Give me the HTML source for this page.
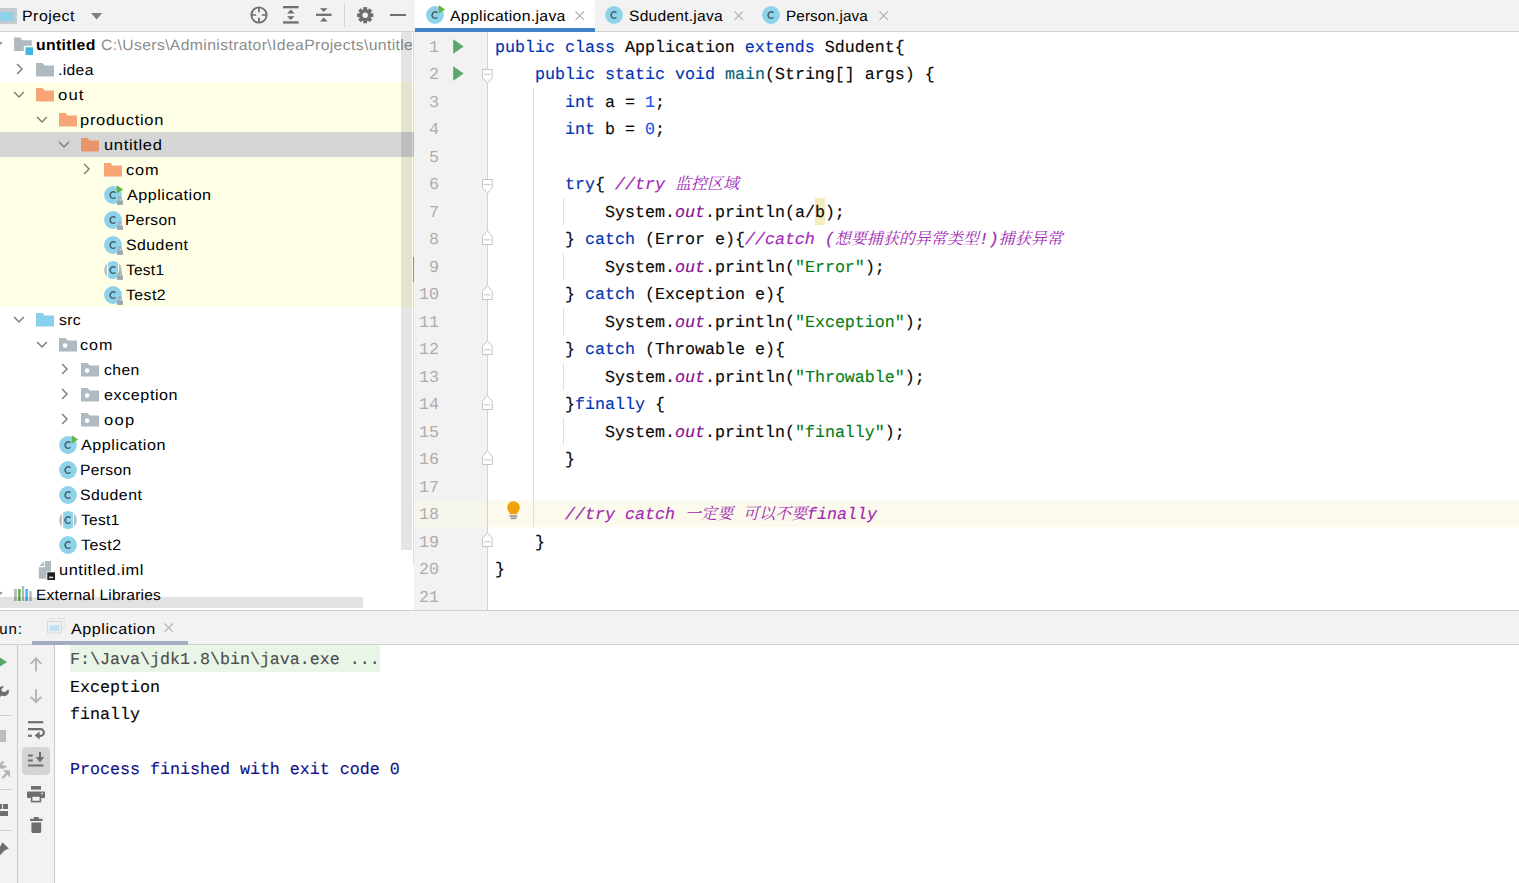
<!DOCTYPE html>
<html lang="en"><head><meta charset="utf-8"><title>untitled - Application.java</title>
<style>
html,body{margin:0;padding:0;}
body{width:1519px;height:883px;position:relative;overflow:hidden;background:#fff;
 font-family:"Liberation Sans",sans-serif;color:#000;text-rendering:geometricPrecision;}
section{position:absolute;left:0;top:0;width:0;height:0}
.ic{position:absolute;display:block;overflow:visible}
.abs{position:absolute}
.tl{position:absolute;transform-origin:0 0;white-space:pre;font-size:15px;letter-spacing:0.62px;line-height:25px;height:25px;
 margin-top:1.0px;color:#000}
.tl.b{font-weight:bold}
.tl.g{color:#8c8c8c}
.cl,.ln,.co{position:absolute;white-space:pre;font-family:"Liberation Mono",monospace;font-size:16.667px;
 line-height:27.5px;height:27.5px;color:#080808;letter-spacing:-0.0018px}
.cl,.co{-webkit-text-stroke:0.15px}
.ln{left:414px;width:25px;text-align:right;color:#adadad}
.k{color:#0033b3} .s{color:#067d17} .n{color:#1750eb} .m{color:#00627a}
.f{color:#871094;font-style:italic}
.c{color:#a128b4;font-style:italic}
.w{background:#f6ebbc}
.cj{display:inline-block;overflow:visible;vertical-align:baseline;font-family:"Liberation Mono","Noto Serif CJK SC",serif;font-size:16px;letter-spacing:0;-webkit-text-stroke:0;white-space:nowrap}
.tab{position:absolute;top:0;height:31px;line-height:31px;font-size:15px;letter-spacing:0.3px;white-space:pre}
</style></head><body>
<section id="project-tool-window" aria-label="Project tool window">
<div class="abs" style="left:0;top:82px;width:414px;height:225px;background:#fffee6"></div>
<div class="abs" style="left:0;top:132px;width:414px;height:25px;background:#d5d5d5"></div>
<svg class="ic" style="left:-9.4px;top:41.3px" width="12" height="7.2" viewBox="0 0 12 7.2" ><path d="M1.1 1.1L6 6L10.9 1.1" fill="none" stroke="#7c7c7c" stroke-width="1.45"/></svg>
<svg class="ic" style="left:0px;top:32px" width="34" height="25" viewBox="0 0 34 25" ><path d="M14.1 5.4H20.2L22.6 8.2H31.8V13.8H23.8V18.9H14.1Z" fill="#aeb9c0"/><rect x="25.5" y="15.3" width="7.5" height="7.7" fill="#40b6e0"/></svg>
<div class="tl b" style="left:35.60px;top:32px;letter-spacing:0.315px;transform:scaleX(1.0530);transform-origin:0 0;">untitled</div>
<div class="tl g" style="left:101.3px;top:32px;letter-spacing:0.35px;transform:scaleX(1.049);width:297px;overflow:hidden">C:\Users\Administrator\IdeaProjects\untitled</div>
<svg class="ic" style="left:15.9px;top:63.099999999999994px" width="7.2" height="12" viewBox="0 0 7.2 12" ><path d="M1.1 1.1L6 6L1.1 10.9" fill="none" stroke="#7c7c7c" stroke-width="1.45"/></svg>
<svg class="ic" style="left:36.1px;top:62.5px" width="18" height="14" viewBox="0 0 18 14" ><path d="M0 0H6.6L8.6 2.6H18V13.6H0Z" fill="#aeb9c0"/></svg>
<div class="tl" style="left:57.75px;top:57px;letter-spacing:0.332px;transform:scaleX(1.0453);transform-origin:0 0;">.idea</div>
<svg class="ic" style="left:13.0px;top:91.3px" width="12" height="7.2" viewBox="0 0 12 7.2" ><path d="M1.1 1.1L6 6L10.9 1.1" fill="none" stroke="#7c7c7c" stroke-width="1.45"/></svg>
<svg class="ic" style="left:36.1px;top:87.5px" width="18" height="14" viewBox="0 0 18 14" ><path d="M0 0H6.6L8.6 2.6H18V13.6H0Z" fill="#f6a574"/></svg>
<div class="tl" style="left:58.00px;top:82px;letter-spacing:0.956px;transform:scaleX(1.1169);transform-origin:0 0;">out</div>
<svg class="ic" style="left:36.0px;top:116.3px" width="12" height="7.2" viewBox="0 0 12 7.2" ><path d="M1.1 1.1L6 6L10.9 1.1" fill="none" stroke="#7c7c7c" stroke-width="1.45"/></svg>
<svg class="ic" style="left:59.2px;top:112.5px" width="18" height="14" viewBox="0 0 18 14" ><path d="M0 0H6.6L8.6 2.6H18V13.6H0Z" fill="#f6a574"/></svg>
<div class="tl" style="left:80.25px;top:107px;letter-spacing:0.652px;transform:scaleX(1.0989);transform-origin:0 0;">production</div>
<svg class="ic" style="left:58.0px;top:141.3px" width="12" height="7.2" viewBox="0 0 12 7.2" ><path d="M1.1 1.1L6 6L10.9 1.1" fill="none" stroke="#7c7c7c" stroke-width="1.45"/></svg>
<svg class="ic" style="left:80.9px;top:137.5px" width="18" height="14" viewBox="0 0 18 14" ><path d="M0 0H6.6L8.6 2.6H18V13.6H0Z" fill="#e8956c"/></svg>
<div class="tl" style="left:103.50px;top:132px;letter-spacing:0.604px;transform:scaleX(1.1009);transform-origin:0 0;">untitled</div>
<svg class="ic" style="left:83.30000000000001px;top:163.10000000000002px" width="7.2" height="12" viewBox="0 0 7.2 12" ><path d="M1.1 1.1L6 6L1.1 10.9" fill="none" stroke="#7c7c7c" stroke-width="1.45"/></svg>
<svg class="ic" style="left:104.1px;top:162.5px" width="18" height="14" viewBox="0 0 18 14" ><path d="M0 0H6.6L8.6 2.6H18V13.6H0Z" fill="#f6a574"/></svg>
<div class="tl" style="left:125.50px;top:157px;letter-spacing:0.855px;transform:scaleX(1.0869);transform-origin:0 0;">com</div>
<svg class="ic" style="left:102.0px;top:183.9px" width="22" height="22" viewBox="0 0 22 22" ><circle cx="11" cy="11" r="8.9" fill="#8fd3ea"/><path d="M13.45 8.85A3.05 3.3 0 1 0 13.45 13.35" fill="none" stroke="#3f5561" stroke-opacity="0.92" stroke-width="1.4"/><path d="M14.7 1.2L21.2 5.5L14.7 9.4Z" fill="#62b543"/><path d="M16.7 16.6V14.3a1.25 1.4 0 0 1 2.5 0V16.6" fill="none" stroke="#9aa7b0" stroke-width="1.1"/><rect x="15" y="16.4" width="5.9" height="4.5" fill="#9aa7b0"/></svg>
<div class="tl" style="left:126.60px;top:182px;letter-spacing:0.477px;transform:scaleX(1.0761);transform-origin:0 0;">Application</div>
<svg class="ic" style="left:102.0px;top:208.9px" width="22" height="22" viewBox="0 0 22 22" ><circle cx="11" cy="11" r="8.9" fill="#8fd3ea"/><path d="M13.45 8.85A3.05 3.3 0 1 0 13.45 13.35" fill="none" stroke="#3f5561" stroke-opacity="0.92" stroke-width="1.4"/><path d="M16.7 16.6V14.3a1.25 1.4 0 0 1 2.5 0V16.6" fill="none" stroke="#9aa7b0" stroke-width="1.1"/><rect x="15" y="16.4" width="5.9" height="4.5" fill="#9aa7b0"/></svg>
<div class="tl" style="left:125.20px;top:207px;letter-spacing:0.328px;transform:scaleX(1.0418);transform-origin:0 0;">Person</div>
<svg class="ic" style="left:102.0px;top:233.9px" width="22" height="22" viewBox="0 0 22 22" ><circle cx="11" cy="11" r="8.9" fill="#8fd3ea"/><path d="M13.45 8.85A3.05 3.3 0 1 0 13.45 13.35" fill="none" stroke="#3f5561" stroke-opacity="0.92" stroke-width="1.4"/><path d="M16.7 16.6V14.3a1.25 1.4 0 0 1 2.5 0V16.6" fill="none" stroke="#9aa7b0" stroke-width="1.1"/><rect x="15" y="16.4" width="5.9" height="4.5" fill="#9aa7b0"/></svg>
<div class="tl" style="left:126.20px;top:232px;letter-spacing:0.458px;transform:scaleX(1.0546);transform-origin:0 0;">Sdudent</div>
<svg class="ic" style="left:102.0px;top:258.9px" width="22" height="22" viewBox="0 0 22 22" ><path d="M4.9 4.52A8.9 8.9 0 0 0 4.9 17.48Z" fill="#b5bdc4"/><path d="M17 4.43A8.9 8.9 0 0 1 17 17.57Z" fill="#b5bdc4"/><path d="M6.1 3.57A8.9 8.9 0 0 1 16 3.64V18.36A8.9 8.9 0 0 1 6.1 18.43Z" fill="#8fd3ea"/><path d="M13.45 8.85A3.05 3.3 0 1 0 13.45 13.35" fill="none" stroke="#3f5561" stroke-opacity="0.92" stroke-width="1.4"/><path d="M16.7 16.6V14.3a1.25 1.4 0 0 1 2.5 0V16.6" fill="none" stroke="#9aa7b0" stroke-width="1.1"/><rect x="15" y="16.4" width="5.9" height="4.5" fill="#9aa7b0"/></svg>
<div class="tl" style="left:126.20px;top:257px;letter-spacing:0.236px;transform:scaleX(1.0335);transform-origin:0 0;">Test1</div>
<svg class="ic" style="left:102.0px;top:283.9px" width="22" height="22" viewBox="0 0 22 22" ><circle cx="11" cy="11" r="8.9" fill="#8fd3ea"/><path d="M13.45 8.85A3.05 3.3 0 1 0 13.45 13.35" fill="none" stroke="#3f5561" stroke-opacity="0.92" stroke-width="1.4"/><path d="M16.7 16.6V14.3a1.25 1.4 0 0 1 2.5 0V16.6" fill="none" stroke="#9aa7b0" stroke-width="1.1"/><rect x="15" y="16.4" width="5.9" height="4.5" fill="#9aa7b0"/></svg>
<div class="tl" style="left:126.20px;top:282px;letter-spacing:0.405px;transform:scaleX(1.0554);transform-origin:0 0;">Test2</div>
<svg class="ic" style="left:13.0px;top:316.3px" width="12" height="7.2" viewBox="0 0 12 7.2" ><path d="M1.1 1.1L6 6L10.9 1.1" fill="none" stroke="#7c7c7c" stroke-width="1.45"/></svg>
<svg class="ic" style="left:36.1px;top:312.5px" width="18" height="14" viewBox="0 0 18 14" ><path d="M0 0H6.6L8.6 2.6H18V13.6H0Z" fill="#87cfea"/></svg>
<div class="tl" style="left:59.00px;top:307px;letter-spacing:0.326px;transform:scaleX(1.0452);transform-origin:0 0;">src</div>
<svg class="ic" style="left:36.0px;top:341.3px" width="12" height="7.2" viewBox="0 0 12 7.2" ><path d="M1.1 1.1L6 6L10.9 1.1" fill="none" stroke="#7c7c7c" stroke-width="1.45"/></svg>
<svg class="ic" style="left:59.2px;top:337.5px" width="18" height="14" viewBox="0 0 18 14" ><path d="M0 0H6.6L8.6 2.6H18V13.6H0Z" fill="#aeb9c0"/><circle cx="6.1" cy="7.6" r="2.3" fill="#fff"/></svg>
<div class="tl" style="left:80.45px;top:332px;letter-spacing:0.911px;transform:scaleX(1.0746);transform-origin:0 0;">com</div>
<svg class="ic" style="left:60.9px;top:363.1px" width="7.2" height="12" viewBox="0 0 7.2 12" ><path d="M1.1 1.1L6 6L1.1 10.9" fill="none" stroke="#7c7c7c" stroke-width="1.45"/></svg>
<svg class="ic" style="left:80.9px;top:362.5px" width="18" height="14" viewBox="0 0 18 14" ><path d="M0 0H6.6L8.6 2.6H18V13.6H0Z" fill="#aeb9c0"/><circle cx="6.1" cy="7.6" r="2.3" fill="#fff"/></svg>
<div class="tl" style="left:104.25px;top:357px;letter-spacing:0.420px;transform:scaleX(1.0445);transform-origin:0 0;">chen</div>
<svg class="ic" style="left:60.9px;top:388.1px" width="7.2" height="12" viewBox="0 0 7.2 12" ><path d="M1.1 1.1L6 6L1.1 10.9" fill="none" stroke="#7c7c7c" stroke-width="1.45"/></svg>
<svg class="ic" style="left:80.9px;top:387.5px" width="18" height="14" viewBox="0 0 18 14" ><path d="M0 0H6.6L8.6 2.6H18V13.6H0Z" fill="#aeb9c0"/><circle cx="6.1" cy="7.6" r="2.3" fill="#fff"/></svg>
<div class="tl" style="left:103.50px;top:382px;letter-spacing:0.534px;transform:scaleX(1.0745);transform-origin:0 0;">exception</div>
<svg class="ic" style="left:60.9px;top:413.1px" width="7.2" height="12" viewBox="0 0 7.2 12" ><path d="M1.1 1.1L6 6L1.1 10.9" fill="none" stroke="#7c7c7c" stroke-width="1.45"/></svg>
<svg class="ic" style="left:80.9px;top:412.5px" width="18" height="14" viewBox="0 0 18 14" ><path d="M0 0H6.6L8.6 2.6H18V13.6H0Z" fill="#aeb9c0"/><circle cx="6.1" cy="7.6" r="2.3" fill="#fff"/></svg>
<div class="tl" style="left:103.50px;top:407px;letter-spacing:1.136px;transform:scaleX(1.1028);transform-origin:0 0;">oop</div>
<svg class="ic" style="left:57.0px;top:433.9px" width="22" height="22" viewBox="0 0 22 22" ><circle cx="11" cy="11" r="8.9" fill="#8fd3ea"/><path d="M13.45 8.85A3.05 3.3 0 1 0 13.45 13.35" fill="none" stroke="#3f5561" stroke-opacity="0.92" stroke-width="1.4"/><path d="M14.7 1.2L21.2 5.5L14.7 9.4Z" fill="#62b543"/></svg>
<div class="tl" style="left:81.25px;top:432px;letter-spacing:0.495px;transform:scaleX(1.0781);transform-origin:0 0;">Application</div>
<svg class="ic" style="left:57.0px;top:458.9px" width="22" height="22" viewBox="0 0 22 22" ><circle cx="11" cy="11" r="8.9" fill="#8fd3ea"/><path d="M13.45 8.85A3.05 3.3 0 1 0 13.45 13.35" fill="none" stroke="#3f5561" stroke-opacity="0.92" stroke-width="1.4"/></svg>
<div class="tl" style="left:80.45px;top:457px;letter-spacing:0.306px;transform:scaleX(1.0441);transform-origin:0 0;">Person</div>
<svg class="ic" style="left:57.0px;top:483.9px" width="22" height="22" viewBox="0 0 22 22" ><circle cx="11" cy="11" r="8.9" fill="#8fd3ea"/><path d="M13.45 8.85A3.05 3.3 0 1 0 13.45 13.35" fill="none" stroke="#3f5561" stroke-opacity="0.92" stroke-width="1.4"/></svg>
<div class="tl" style="left:80.45px;top:482px;letter-spacing:0.457px;transform:scaleX(1.0546);transform-origin:0 0;">Sdudent</div>
<svg class="ic" style="left:57.0px;top:508.9px" width="22" height="22" viewBox="0 0 22 22" ><path d="M4.9 4.52A8.9 8.9 0 0 0 4.9 17.48Z" fill="#b5bdc4"/><path d="M17 4.43A8.9 8.9 0 0 1 17 17.57Z" fill="#b5bdc4"/><path d="M6.1 3.57A8.9 8.9 0 0 1 16 3.64V18.36A8.9 8.9 0 0 1 6.1 18.43Z" fill="#8fd3ea"/><path d="M13.45 8.85A3.05 3.3 0 1 0 13.45 13.35" fill="none" stroke="#3f5561" stroke-opacity="0.92" stroke-width="1.4"/></svg>
<div class="tl" style="left:81.45px;top:507px;letter-spacing:0.281px;transform:scaleX(1.0381);transform-origin:0 0;">Test1</div>
<svg class="ic" style="left:57.0px;top:533.9px" width="22" height="22" viewBox="0 0 22 22" ><circle cx="11" cy="11" r="8.9" fill="#8fd3ea"/><path d="M13.45 8.85A3.05 3.3 0 1 0 13.45 13.35" fill="none" stroke="#3f5561" stroke-opacity="0.92" stroke-width="1.4"/></svg>
<div class="tl" style="left:81.45px;top:532px;letter-spacing:0.439px;transform:scaleX(1.0639);transform-origin:0 0;">Test2</div>
<svg class="ic" style="left:0px;top:557px" width="56" height="25" viewBox="0 0 56 25" ><path d="M44.8 4.1H51V21.7H38.8V10.2H44.8Z" fill="#aeb9c0"/><path d="M39.5 8.9L43.8 4.6V8.9Z" fill="#aeb9c0"/><rect x="46.5" y="14.5" width="9" height="9" fill="#fff"/><rect x="47.3" y="15.3" width="7.7" height="7.7" fill="#231f20"/><rect x="49" y="19.6" width="4.2" height="1.6" fill="#d8d8d8"/></svg>
<div class="tl" style="left:58.80px;top:557px;letter-spacing:0.503px;transform:scaleX(1.0916);transform-origin:0 0;">untitled.iml</div>
<svg class="ic" style="left:-9.4px;top:591.3px" width="12" height="7.2" viewBox="0 0 12 7.2" ><path d="M1.1 1.1L6 6L10.9 1.1" fill="none" stroke="#7c7c7c" stroke-width="1.45"/></svg>
<svg class="ic" style="left:0px;top:582px" width="34" height="25" viewBox="0 0 34 25" ><rect x="14.1" y="7" width="2.7" height="12" fill="#aeb9c0"/><rect x="18.1" y="7" width="2.5" height="12" fill="#62b543"/><rect x="21.9" y="4.1" width="2.3" height="14.9" fill="#aeb9c0"/><rect x="25.4" y="7" width="2.5" height="12" fill="#40b6e0"/><rect x="29.3" y="9.2" width="2.4" height="9.8" fill="#aeb9c0"/></svg>
<div class="tl" style="left:35.60px;top:582px;letter-spacing:0.208px;transform:scaleX(1.0387);transform-origin:0 0;">External Libraries</div>
<div class="abs" style="left:401px;top:32px;width:11px;height:518px;background:rgba(0,0,0,0.105)"></div>
<div class="abs" style="left:413px;top:32px;width:1px;height:533px;background:rgba(0,0,0,0.13)"></div>
<div class="abs" style="left:413px;top:257px;width:1px;height:25px;background:#8a8a8a"></div>
<div class="abs" style="left:0;top:597.2px;width:362.5px;height:10.6px;background:rgba(0,0,0,0.115)"></div>
<div class="abs" style="left:0;top:0;width:414px;height:31px;background:#f2f2f2"></div>
<div class="abs" style="left:0;top:31px;width:414px;height:1px;background:#d1d1d1"></div>
<div class="abs" style="left:-3px;top:7.6px;width:20px;height:16px;background:#c3cbd1"></div>
<div class="abs" style="left:-3px;top:11.8px;width:16.8px;height:9px;background:#8fd1ea"></div>
<div class="tab" style="left:22.00px;top:0.6px;letter-spacing:0.439px;transform:scaleX(1.0631);transform-origin:0 0;">Project</div>
<svg class="ic" style="left:90.5px;top:13px" width="11.2" height="6.6" viewBox="0 0 11.2 6.6" ><path d="M0 0H11.2L5.6 6.4Z" fill="#7f7f7f"/></svg>
<svg class="ic" style="left:250px;top:5.6px" width="18" height="18" viewBox="0 0 18 18" ><circle cx="9" cy="9" r="7.6" fill="none" stroke="#6e6e6e" stroke-width="1.9"/><path d="M9 1.4V6.2M9 11.8V16.6M1.4 9H6.2M11.8 9H16.6" stroke="#6e6e6e" stroke-width="1.7"/></svg>
<svg class="ic" style="left:283.2px;top:6.2px" width="15.6" height="17.6" viewBox="0 0 15.6 17.6" ><rect x="0" y="0" width="15.6" height="2.3" fill="#6e6e6e"/><rect x="0" y="15.3" width="15.6" height="2.3" fill="#6e6e6e"/><path d="M7.8 3.6L11.6 7.4H4Z" fill="#6e6e6e"/><path d="M7.8 14L11.6 10.2H4Z" fill="#6e6e6e"/></svg>
<svg class="ic" style="left:316.4px;top:5.8px" width="15.6" height="17.6" viewBox="0 0 15.6 17.6" ><rect x="0" y="7.7" width="15.6" height="2.2" fill="#6e6e6e"/><path d="M7.8 6L11.6 2.2H4Z" fill="#6e6e6e"/><path d="M7.8 11.6L11.6 15.4H4Z" fill="#6e6e6e"/></svg>
<div class="abs" style="left:344px;top:3px;width:1px;height:24px;background:#d4d4d4"></div>
<svg class="ic" style="left:356.8px;top:6.5px" width="16.4" height="16.4" viewBox="0 0 16.4 16.4" ><g transform="translate(8.2 8.2)"><rect x="-1.9" y="-8.1" width="3.8" height="4" transform="rotate(0)" fill="#6e6e6e"/><rect x="-1.9" y="-8.1" width="3.8" height="4" transform="rotate(45)" fill="#6e6e6e"/><rect x="-1.9" y="-8.1" width="3.8" height="4" transform="rotate(90)" fill="#6e6e6e"/><rect x="-1.9" y="-8.1" width="3.8" height="4" transform="rotate(135)" fill="#6e6e6e"/><rect x="-1.9" y="-8.1" width="3.8" height="4" transform="rotate(180)" fill="#6e6e6e"/><rect x="-1.9" y="-8.1" width="3.8" height="4" transform="rotate(225)" fill="#6e6e6e"/><rect x="-1.9" y="-8.1" width="3.8" height="4" transform="rotate(270)" fill="#6e6e6e"/><rect x="-1.9" y="-8.1" width="3.8" height="4" transform="rotate(315)" fill="#6e6e6e"/><circle r="4.4" fill="none" stroke="#6e6e6e" stroke-width="3.2"/></g></svg>
<div class="abs" style="left:390.4px;top:13.6px;width:15.2px;height:2px;background:#6e6e6e"></div>
</section>
<section id="editor" aria-label="Editor - Application.java">
<div class="abs" style="left:414px;top:32px;width:73px;height:578px;background:#f2f2f2"></div>
<div style="position:absolute;left:414px;top:500.00px;width:74px;height:27px;background:#f6f5ec"></div>
<div style="position:absolute;left:488px;top:500.00px;width:1031px;height:27px;background:#fcfaed"></div>
<div style="position:absolute;left:815px;top:197.50px;width:10px;height:27.5px;background:#f6ebbc"></div>
<div style="position:absolute;left:487px;top:32px;width:1px;height:578px;background:#d4d4d4"></div>
<div style="position:absolute;left:533px;top:87.50px;width:1px;height:440.00px;background:#dedede"></div>
<div style="position:absolute;left:563px;top:197.50px;width:1px;height:27.5px;background:#dedede"></div>
<div style="position:absolute;left:563px;top:252.50px;width:1px;height:27.5px;background:#dedede"></div>
<div style="position:absolute;left:563px;top:307.50px;width:1px;height:27.5px;background:#dedede"></div>
<div style="position:absolute;left:563px;top:362.50px;width:1px;height:27.5px;background:#dedede"></div>
<div style="position:absolute;left:563px;top:417.50px;width:1px;height:27.5px;background:#dedede"></div>
<div class="ln" style="top:34.80px">1</div>
<div class="cl" style="left:495px;top:34.80px"><span class="k">public</span> <span class="k">class</span> Application <span class="k">extends</span> Sdudent{</div>
<div class="ln" style="top:62.30px">2</div>
<div class="cl" style="left:535px;top:62.30px"><span class="k">public</span> <span class="k">static</span> <span class="k">void</span> <span class="m">main</span>(String[] args) {</div>
<div class="ln" style="top:89.80px">3</div>
<div class="cl" style="left:565px;top:89.80px"><span class="k">int</span> a = <span class="n">1</span>;</div>
<div class="ln" style="top:117.30px">4</div>
<div class="cl" style="left:565px;top:117.30px"><span class="k">int</span> b = <span class="n">0</span>;</div>
<div class="ln" style="top:144.80px">5</div>
<div class="ln" style="top:172.30px">6</div>
<div class="cl" style="left:565px;top:172.30px"><span class="k">try</span>{ <span class="c">//try <span class="cj" style="width:64px">监控区域</span></span></div>
<div class="ln" style="top:199.80px">7</div>
<div class="cl" style="left:605px;top:199.80px">System.<span class="f">out</span>.println(a/b);</div>
<div class="ln" style="top:227.30px">8</div>
<div class="cl" style="left:565px;top:227.30px">} <span class="k">catch</span> (Error e){<span class="c">//catch (<span class="cj" style="width:144px">想要捕获的异常类型</span>!)<span class="cj" style="width:64px">捕获异常</span></span></div>
<div class="ln" style="top:254.80px">9</div>
<div class="cl" style="left:605px;top:254.80px">System.<span class="f">out</span>.println(<span class="s">"Error"</span>);</div>
<div class="ln" style="top:282.30px">10</div>
<div class="cl" style="left:565px;top:282.30px">} <span class="k">catch</span> (Exception e){</div>
<div class="ln" style="top:309.80px">11</div>
<div class="cl" style="left:605px;top:309.80px">System.<span class="f">out</span>.println(<span class="s">"Exception"</span>);</div>
<div class="ln" style="top:337.30px">12</div>
<div class="cl" style="left:565px;top:337.30px">} <span class="k">catch</span> (Throwable e){</div>
<div class="ln" style="top:364.80px">13</div>
<div class="cl" style="left:605px;top:364.80px">System.<span class="f">out</span>.println(<span class="s">"Throwable"</span>);</div>
<div class="ln" style="top:392.30px">14</div>
<div class="cl" style="left:565px;top:392.30px">}<span class="k">finally</span> {</div>
<div class="ln" style="top:419.80px">15</div>
<div class="cl" style="left:605px;top:419.80px">System.<span class="f">out</span>.println(<span class="s">"finally"</span>);</div>
<div class="ln" style="top:447.30px">16</div>
<div class="cl" style="left:565px;top:447.30px">}</div>
<div class="ln" style="top:474.80px">17</div>
<div class="ln" style="top:502.30px">18</div>
<div class="cl" style="left:565px;top:502.30px"><span class="c">//try catch <span class="cj" style="width:48px">一定要</span> <span class="cj" style="width:64px">可以不要</span>finally</span></div>
<div class="ln" style="top:529.80px">19</div>
<div class="cl" style="left:535px;top:529.80px">}</div>
<div class="ln" style="top:557.30px">20</div>
<div class="cl" style="left:495px;top:557.30px">}</div>
<div class="ln" style="top:584.80px">21</div>
<svg class="ic" style="left:453px;top:38.5px" width="11" height="15" viewBox="0 0 11 15" ><path d="M0.2 0.2L10.7 7.5L0.2 14.8Z" fill="#59a869"/></svg>
<svg class="ic" style="left:453px;top:66.0px" width="11" height="15" viewBox="0 0 11 15" ><path d="M0.2 0.2L10.7 7.5L0.2 14.8Z" fill="#59a869"/></svg>
<svg class="ic" style="left:482.1px;top:68.8px" width="10.8" height="15" viewBox="0 0 10.8 15" ><path d="M0.5 0.5H10.3V8.6L5.4 14.4L0.5 8.6Z" fill="#fff" stroke="#c4c4c4" stroke-width="1"/><path d="M2.1 5.4H8.7" stroke="#c4c4c4" stroke-width="1"/></svg>
<svg class="ic" style="left:482.1px;top:178.8px" width="10.8" height="15" viewBox="0 0 10.8 15" ><path d="M0.5 0.5H10.3V8.6L5.4 14.4L0.5 8.6Z" fill="#fff" stroke="#c4c4c4" stroke-width="1"/><path d="M2.1 5.4H8.7" stroke="#c4c4c4" stroke-width="1"/></svg>
<svg class="ic" style="left:482.1px;top:229.75px" width="10.8" height="15" viewBox="0 0 10.8 15" ><path d="M0.5 14.5H10.3V6.4L5.4 0.6L0.5 6.4Z" fill="#fff" stroke="#c4c4c4" stroke-width="1"/><path d="M2.1 9.8H8.7" stroke="#c4c4c4" stroke-width="1"/></svg>
<svg class="ic" style="left:482.1px;top:284.75px" width="10.8" height="15" viewBox="0 0 10.8 15" ><path d="M0.5 14.5H10.3V6.4L5.4 0.6L0.5 6.4Z" fill="#fff" stroke="#c4c4c4" stroke-width="1"/><path d="M2.1 9.8H8.7" stroke="#c4c4c4" stroke-width="1"/></svg>
<svg class="ic" style="left:482.1px;top:339.75px" width="10.8" height="15" viewBox="0 0 10.8 15" ><path d="M0.5 14.5H10.3V6.4L5.4 0.6L0.5 6.4Z" fill="#fff" stroke="#c4c4c4" stroke-width="1"/><path d="M2.1 9.8H8.7" stroke="#c4c4c4" stroke-width="1"/></svg>
<svg class="ic" style="left:482.1px;top:394.75px" width="10.8" height="15" viewBox="0 0 10.8 15" ><path d="M0.5 14.5H10.3V6.4L5.4 0.6L0.5 6.4Z" fill="#fff" stroke="#c4c4c4" stroke-width="1"/><path d="M2.1 9.8H8.7" stroke="#c4c4c4" stroke-width="1"/></svg>
<svg class="ic" style="left:482.1px;top:449.75px" width="10.8" height="15" viewBox="0 0 10.8 15" ><path d="M0.5 14.5H10.3V6.4L5.4 0.6L0.5 6.4Z" fill="#fff" stroke="#c4c4c4" stroke-width="1"/><path d="M2.1 9.8H8.7" stroke="#c4c4c4" stroke-width="1"/></svg>
<svg class="ic" style="left:482.1px;top:532.25px" width="10.8" height="15" viewBox="0 0 10.8 15" ><path d="M0.5 14.5H10.3V6.4L5.4 0.6L0.5 6.4Z" fill="#fff" stroke="#c4c4c4" stroke-width="1"/><path d="M2.1 9.8H8.7" stroke="#c4c4c4" stroke-width="1"/></svg>
<svg class="ic" style="left:506.5px;top:500.9px" width="13" height="18.5" viewBox="0 0 13 18.5" ><path d="M6.5 0.2A6.3 6.3 0 0 1 12.8 6.5C12.8 9 11.2 10.4 10.5 11.6L10.2 13.2H2.8L2.5 11.6C1.8 10.4 0.2 9 0.2 6.5A6.3 6.3 0 0 1 6.5 0.2Z" fill="#f0a20b"/><rect x="2.6" y="14.4" width="7.8" height="1.5" fill="#8c8c8c"/><rect x="3.6" y="16.6" width="5.8" height="1.5" fill="#8c8c8c"/></svg>
<div class="abs" style="left:414px;top:0;width:1105px;height:31px;background:#f2f2f2"></div>
<div class="abs" style="left:414px;top:31px;width:1105px;height:1px;background:#d1d1d1"></div>
<div class="abs" style="left:415px;top:0;width:180px;height:28px;background:#fff"></div>
<div class="abs" style="left:415px;top:28px;width:180px;height:4px;background:#4083c9"></div>
<svg class="ic" style="left:424px;top:4px" width="22" height="22" viewBox="0 0 22 22" ><circle cx="11" cy="11" r="8.9" fill="#8fd3ea"/><path d="M13.45 8.85A3.05 3.3 0 1 0 13.45 13.35" fill="none" stroke="#3f5561" stroke-opacity="0.92" stroke-width="1.4"/><path d="M14.7 1.2L21.2 5.5L14.7 9.4Z" fill="#62b543"/></svg>
<div class="tab" style="left:450.40px;top:0.6px;letter-spacing:0.304px;transform:scaleX(1.0527);transform-origin:0 0;">Application.java</div>
<svg class="ic" style="left:575.3px;top:10.8px" width="9.4" height="9.4" viewBox="0 0 9.4 9.4" ><path d="M0.5 0.5L8.9 8.9M8.9 0.5L0.5 8.9" stroke="#b4b4b4" stroke-width="1.2" fill="none"/></svg>
<svg class="ic" style="left:603px;top:4px" width="22" height="22" viewBox="0 0 22 22" ><circle cx="11" cy="11" r="8.9" fill="#8fd3ea"/><path d="M13.45 8.85A3.05 3.3 0 1 0 13.45 13.35" fill="none" stroke="#3f5561" stroke-opacity="0.92" stroke-width="1.4"/></svg>
<div class="tab" style="left:629.20px;top:0.6px;letter-spacing:0.241px;transform:scaleX(1.0385);transform-origin:0 0;">Sdudent.java</div>
<svg class="ic" style="left:733.6px;top:10.8px" width="9.4" height="9.4" viewBox="0 0 9.4 9.4" ><path d="M0.5 0.5L8.9 8.9M8.9 0.5L0.5 8.9" stroke="#b4b4b4" stroke-width="1.2" fill="none"/></svg>
<svg class="ic" style="left:760px;top:4px" width="22" height="22" viewBox="0 0 22 22" ><circle cx="11" cy="11" r="8.9" fill="#8fd3ea"/><path d="M13.45 8.85A3.05 3.3 0 1 0 13.45 13.35" fill="none" stroke="#3f5561" stroke-opacity="0.92" stroke-width="1.4"/></svg>
<div class="tab" style="left:785.60px;top:0.6px;letter-spacing:0.122px;transform:scaleX(1.0169);transform-origin:0 0;">Person.java</div>
<svg class="ic" style="left:878.5px;top:10.8px" width="9.4" height="9.4" viewBox="0 0 9.4 9.4" ><path d="M0.5 0.5L8.9 8.9M8.9 0.5L0.5 8.9" stroke="#b4b4b4" stroke-width="1.2" fill="none"/></svg>
</section>
<section id="run-tool-window" aria-label="Run tool window">
<div class="abs" style="left:0;top:610px;width:1519px;height:1px;background:#d1d1d1"></div>
<div class="abs" style="left:0;top:611px;width:1519px;height:33px;background:#f2f2f2"></div>
<div class="abs" style="left:0;top:644px;width:1519px;height:1px;background:#d1d1d1"></div>
<div class="tab" style="left:-12.4px;top:614.3px;height:32px;line-height:32px;letter-spacing:0.9px">Run:</div>
<svg class="ic" style="left:47px;top:618px" width="18" height="16" viewBox="0 0 18 16" ><rect x="3.6" y="0.5" width="13.6" height="10" fill="#f2f2f2" stroke="#dcdfe1" stroke-width="1"/><rect x="0.5" y="3.4" width="14" height="11.6" fill="#eef1f3" stroke="#d6dadd" stroke-width="1"/><rect x="2.6" y="7.4" width="9.8" height="5.6" fill="#bfe3ee"/></svg>
<div class="tab" style="left:70.80px;top:614.3px;letter-spacing:0.482px;transform:scaleX(1.0775);transform-origin:0 0;height:32px;line-height:32px;">Application</div>
<svg class="ic" style="left:164px;top:623.4px" width="9.4" height="9.4" viewBox="0 0 9.4 9.4" ><path d="M0.5 0.5L8.9 8.9M8.9 0.5L0.5 8.9" stroke="#b4b4b4" stroke-width="1.2" fill="none"/></svg>
<div class="abs" style="left:32px;top:641px;width:156px;height:3.5px;background:#a3abc2"></div>
<div class="abs" style="left:0;top:645px;width:54.5px;height:238px;background:#f2f2f2"></div>
<div class="abs" style="left:17px;top:645px;width:1px;height:238px;background:#c9c9c9"></div>
<div class="abs" style="left:54px;top:645px;width:1px;height:238px;background:#c9c9c9"></div>
<svg class="ic" style="left:-3px;top:656px" width="10.2" height="12" viewBox="0 0 10.2 12" ><path d="M0.7 0L10 6L0.7 12Z" fill="#59a869"/></svg>
<svg class="ic" style="left:0px;top:686px" width="10" height="14" viewBox="0 0 10 14" ><path d="M-4 13.5L3.6 6.4A4.6 4.6 0 0 1 9.4 0.6L6.4 3.6L8 6.2L10.8 6L13.4 3.4A4.6 4.6 0 0 1 7 9.6L-1 17Z" fill="#6e6e6e" transform="translate(-5.2 -0.2)"/></svg>
<div class="abs" style="left:0;top:715px;width:12px;height:1px;background:#cfcfcf"></div>
<div class="abs" style="left:0;top:789px;width:12px;height:1px;background:#cfcfcf"></div>
<div class="abs" style="left:0;top:830px;width:12px;height:1px;background:#cfcfcf"></div>
<div class="abs" style="left:-4px;top:730px;width:10px;height:12px;background:#bdbdbd"></div>
<svg class="ic" style="left:0px;top:752px" width="12" height="30" viewBox="0 0 12 30" ><path d="M2.2 26.2L7.6 20.8" stroke="#b4b4b4" stroke-width="2.3" fill="none"/><path d="M3.2 18.2H10V25.4Z" fill="#b4b4b4"/><path d="M3.6 9.4L0 13" stroke="#b4b4b4" stroke-width="2.1" fill="none"/><path d="M-1 11.6L7.6 14.4L3.2 16.8L-1 16.4Z" fill="#b4b4b4"/></svg>
<div class="abs" style="left:-4px;top:804px;width:5.6px;height:5.4px;background:#6e6e6e"></div>
<div class="abs" style="left:3px;top:804px;width:5px;height:5.4px;background:#6e6e6e"></div>
<div class="abs" style="left:-4px;top:811px;width:12px;height:5px;background:#6e6e6e"></div>
<svg class="ic" style="left:0px;top:841.5px" width="10" height="14.5" viewBox="0 0 10 14.5" ><path d="M-3 9.6L0.4 13L4.6 8.6L8.8 6.4L2.4 0.2L0.2 4.4L-4 8.6Z" fill="#6e6e6e"/></svg>
<svg class="ic" style="left:30px;top:656.8px" width="12" height="14.6" viewBox="0 0 12 14.6" ><path d="M6 14.4V1.6M0.8 6.8L6 1.4L11.2 6.8" fill="none" stroke="#b4b4b4" stroke-width="1.9"/></svg>
<svg class="ic" style="left:30px;top:688.6px" width="12" height="14.6" viewBox="0 0 12 14.6" ><path d="M6 0.2V13M0.8 7.8L6 13.2L11.2 7.8" fill="none" stroke="#b4b4b4" stroke-width="1.9"/></svg>
<svg class="ic" style="left:28.3px;top:721.4px" width="17" height="19" viewBox="0 0 17 19" ><path d="M0 1.2H15.2" stroke="#6e6e6e" stroke-width="2.2"/><path d="M0 8.2H12.6A3.3 3.3 0 0 1 12.6 14.8H10" fill="none" stroke="#6e6e6e" stroke-width="2.2"/><path d="M0 14.8H3.8" stroke="#6e6e6e" stroke-width="2.2"/><path d="M11.6 10.6V18.6L6.6 14.6Z" fill="#6e6e6e"/></svg>
<div class="abs" style="left:22px;top:747px;width:28px;height:28px;border-radius:4.5px;background:#d4d4d4"></div>
<svg class="ic" style="left:28.2px;top:752.2px" width="16.4" height="15.2" viewBox="0 0 16.4 15.2" ><path d="M0 3.6H4.8M0 8.6H4.8M0 13.6H15.4" stroke="#6e6e6e" stroke-width="2"/><path d="M12 0V6" stroke="#6e6e6e" stroke-width="2"/><path d="M7.8 5L12 10.4L16.2 5Z" fill="#6e6e6e"/></svg>
<svg class="ic" style="left:27.1px;top:786.2px" width="18" height="16.6" viewBox="0 0 18 16.6" ><rect x="4" y="0" width="10" height="3.6" fill="#6e6e6e"/><rect x="0" y="5.4" width="18" height="6.6" rx="0.8" fill="#6e6e6e"/><rect x="4.6" y="10" width="8.8" height="5.6" fill="#f2f2f2" stroke="#6e6e6e" stroke-width="1.6"/><rect x="14.4" y="6.8" width="1.6" height="1.4" fill="#f2f2f2"/></svg>
<svg class="ic" style="left:29.6px;top:817.2px" width="12.6" height="16" viewBox="0 0 12.6 16" ><rect x="0" y="1.8" width="12.6" height="2.2" fill="#6e6e6e"/><rect x="3.8" y="0" width="5" height="2.4" fill="#6e6e6e"/><path d="M1.4 5.4H11.2V14.4A1.6 1.6 0 0 1 9.6 16H3A1.6 1.6 0 0 1 1.4 14.4Z" fill="#6e6e6e"/></svg>
<div class="abs" style="left:70px;top:645px;width:310px;height:27px;background:#e9f5e6"></div>
<div class="co" style="left:70px;top:647.30px;color:#4d4d4d">F:\Java\jdk1.8\bin\java.exe ...</div>
<div class="co" style="left:70px;top:674.80px;color:#080808">Exception</div>
<div class="co" style="left:70px;top:702.30px;color:#080808">finally</div>
<div class="co" style="left:70px;top:757.30px;color:#10108c">Process finished with exit code 0</div>
</section>
</body></html>
